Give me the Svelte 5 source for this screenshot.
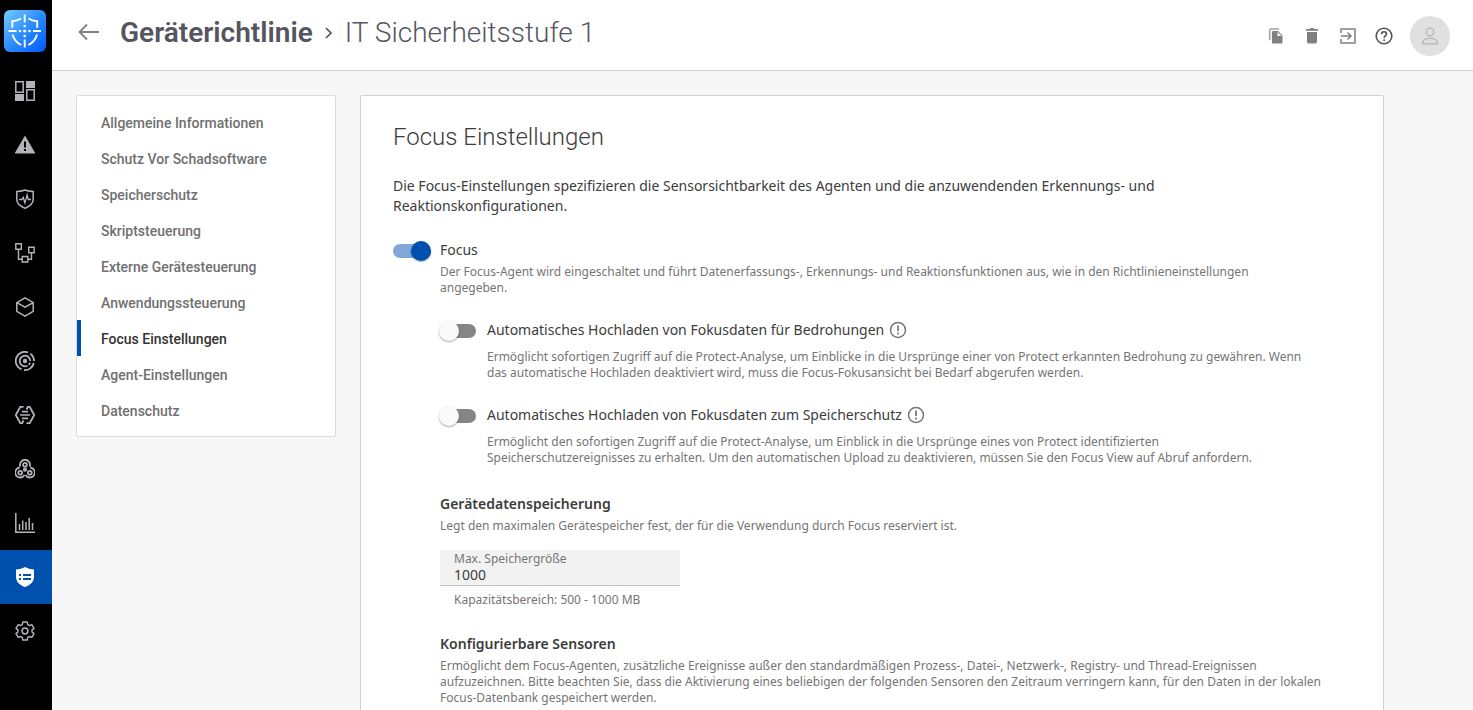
<script lang="ts">
    // Sections of the policy, in menu order
    const sections = [
        'Allgemeine Informationen',
        'Schutz Vor Schadsoftware',
        'Speicherschutz',
        'Skriptsteuerung',
        'Externe Gerätesteuerung',
        'Anwendungssteuerung',
        'Focus Einstellungen',
        'Agent-Einstellungen',
        'Datenschutz',
    ];

    const railItems = [
        { id: 'dashboard', label: 'Dashboard' },
        { id: 'alerts', label: 'Warnungen' },
        { id: 'protect', label: 'Protect' },
        { id: 'focus', label: 'Focus' },
        { id: 'assets', label: 'Assets' },
        { id: 'zones', label: 'Zonen' },
        { id: 'lists', label: 'Listen' },
        { id: 'users', label: 'Benutzer' },
        { id: 'reports', label: 'Berichte' },
        { id: 'policies', label: 'Richtlinien' },
        { id: 'settings', label: 'Einstellungen' },
    ];

    let activeSection = $state('Focus Einstellungen');
    let activeRail = $state('policies');
    let focusOn = $state(true);
    let storage = $state('1000');

    let uploads = $state([
        {
            id: 'upload-threats',
            on: false,
            label: 'Automatisches Hochladen von Fokusdaten für Bedrohungen',
            text: 'Ermöglicht sofortigen Zugriff auf die Protect-Analyse, um Einblicke in die Ursprünge einer von Protect erkannten Bedrohung zu gewähren. Wenn das automatische Hochladen deaktiviert wird, muss die Focus-Fokusansicht bei Bedarf abgerufen werden.',
        },
        {
            id: 'upload-memory',
            on: false,
            label: 'Automatisches Hochladen von Fokusdaten zum Speicherschutz',
            text: 'Ermöglicht den sofortigen Zugriff auf die Protect-Analyse, um Einblick in die Ursprünge eines von Protect identifizierten Speicherschutzereignisses zu erhalten. Um den automatischen Upload zu deaktivieren, müssen Sie den Focus View auf Abruf anfordern.',
        },
    ]);
</script>

<div class="shell">
    <nav class="rail" aria-label="Hauptnavigation">
        <a class="logo" href="#home" aria-label="Startseite">
            <svg width="42" height="42" viewBox="0 0 42 42" fill="none">
                <defs>
                    <linearGradient id="logo-fill" x1="0" y1="0" x2="1" y2="1">
                        <stop offset="0" stop-color="#79ccff" />
                        <stop offset="0.5" stop-color="#2b8dff" />
                        <stop offset="1" stop-color="#0059ff" />
                    </linearGradient>
                </defs>
                <rect width="42" height="42" rx="6" fill="url(#logo-fill)" />
                <g stroke="#fff" stroke-width="1.9">
                    <path d="M20.700 4.500v8M20.700 29.500v8M4.500 21h8M29 21h8" />
                    <path d="M17 8.500c-2.500 1.700-5.500 2.500-8.700 2.700v6.500M24.500 8.500c2.500 1.700 5.500 2.500 8.700 2.700v6.500M8.500 24.500c1.200 4.800 4.200 8.300 8.700 10.500M33 24.500c-1.200 4.800-4.200 8.300-8.700 10.500" />
                </g>
                <g fill="#fff">
                    <circle cx="20.700" cy="21" r="1.600" />
                    <circle cx="20.700" cy="16" r="1.300" />
                    <circle cx="20.700" cy="26" r="1.300" />
                    <circle cx="16" cy="21" r="1.300" />
                    <circle cx="25.500" cy="21" r="1.300" />
                </g>
            </svg>
        </a>
        {#each railItems as item}
            <a
                href={'#' + item.id}
                class="rail-item"
                class:active={activeRail === item.id}
                aria-label={item.label}
                onclick={() => (activeRail = item.id)}
            >
                <svg width="20" height="20" viewBox="0 0 20 20" fill="none" stroke="currentColor" stroke-width="1.500">
                    {#if item.id === 'dashboard'}
                        <path d="M.8.800h7.400v10.400H.8zM11.800 8.800h7.400v10.400h-7.400z" />
                        <path d="M11 0h9v7h-9zM0 13h9v7H0z" fill="currentColor" stroke="none" />
                    {:else if item.id === 'alerts'}
                        <path d="M10 .5 20.500 18.500H-.5zM9 6.500v6h2v-6zM9 14v2h2v-2z" fill="currentColor" fill-rule="evenodd" stroke="none" />
                    {:else if item.id === 'protect'}
                        <path d="M10 1c2.600 1 5.300 1.500 8.200 1.600v7.900c0 4-3.500 6.800-8.200 8.700-4.700-1.900-8.200-4.700-8.200-8.700V2.600C4.700 2.500 7.400 2 10 1z" />
                        <path d="M4 10.500h2.800l1.400-2.200 1.700 5.700 2.200-8 1.200 4.500H16" stroke-width="1.300" />
                    {:else if item.id === 'focus'}
                        <path d="M.8.800h5.500v5.500H.8zM13.700 4.200h5.500v5.500h-5.500zM7.200 13.500h5.600V19H7.200zM3.500 6.500v9.700h3.700M16.500 10v6.200h-3.700" stroke-width="1.400" />
                    {:else if item.id === 'assets'}
                        <path d="m10 .9 8.200 4.700v8.800L10 19.100l-8.200-4.700V5.600zM1.800 5.600 10 10.200l8.200-4.600" />
                    {:else if item.id === 'zones'}
                        <g stroke-width="1.800">
                            <path d="M13 1.500A9 9 0 1 0 6.500 18.300M9 19a9 9 0 0 0 9.800-7M19 10A9 9 0 0 0 15.300 2.700" />
                            <path d="M12.500 14.700A5.300 5.300 0 1 1 15.300 10M15 11.800a5.300 5.300 0 0 1-1.300 2" />
                        </g>
                        <circle cx="10" cy="10" r="2.200" fill="currentColor" stroke="none" />
                    {:else if item.id === 'lists'}
                        <path d="M8.500 1.800H5.300L.8 10l4.500 8.200H7.200l1.300-2.700M11.500 18.200h3.200l4.500-8.200-4.500-8.200h-1.900l-1.300 2.700" stroke-width="1.800" />
                        <path d="M7 6.700h6M5 10h10M7 13.300h6" stroke-width="1.700" />
                    {:else if item.id === 'users'}
                        <g stroke-width="1.800">
                            <path d="M5.300 7.500a5 5 0 1 1 9.400 0M4.800 8.500a5 5 0 1 0 4.800 7.300M15.200 8.500a5 5 0 1 1-4.800 7.300" />
                            <circle cx="10" cy="5.800" r="1.900" />
                            <circle cx="5.200" cy="13.700" r="1.900" />
                            <circle cx="14.800" cy="13.700" r="1.900" />
                            <circle cx="10" cy="10.700" r="1.200" />
                        </g>
                    {:else if item.id === 'reports'}
                        <path d="M.8 0v19.200H20M4.500 17v-6M7.700 17V7.500M11 17V9M14.200 17V5M17.500 17V10" />
                    {:else if item.id === 'policies'}
                        <path d="M10 0c2.700 1.600 5.700 2.400 9 2.500v7c0 5-3.300 8.500-9 10.500-5.700-2-9-5.500-9-10.500v-7C4.300 2.400 7.300 1.600 10 0z" fill="currentColor" stroke="none" />
                        <path d="M4 8h2M8 8h8M4 12h2M8 12h8" stroke="#0050ad" stroke-width="1.800" />
                    {:else}
                        <path d="m7.800 1-.5 2.600-1.600.9-2.500-.9L1 7.400l2 1.700v1.800l-2 1.700 2.200 3.800 2.500-.9 1.600.9.500 2.600h4.400l.5-2.600 1.600-.9 2.500.9 2.200-3.800-2-1.700V9.100l2-1.700-2.200-3.800-2.500.9-1.600-.9-.5-2.600z" stroke-linejoin="round" stroke-width="1.400" />
                        <circle cx="10" cy="10" r="2.900" />
                    {/if}
                </svg>
            </a>
        {/each}
    </nav>

    <div class="page">
        <header class="topbar">
            <button class="icon-btn back" aria-label="Zurück">
                <svg width="22" height="18" viewBox="0 0 22 18" fill="none" stroke="#808080" stroke-width="1.800">
                    <path d="M21 9H2M9 1.500 1.500 9 9 16.500" />
                </svg>
            </button>
            <h1 class="crumbs">
                <a href="#policies">Geräterichtlinie</a>
                <svg width="8" height="12" viewBox="0 0 8 12" fill="none" stroke="#55555f" stroke-width="1.700" aria-hidden="true">
                    <path d="m1 1 5 5-5 5" />
                </svg>
                <span>IT Sicherheitsstufe 1</span>
            </h1>
            <div class="actions">
                <button class="icon-btn" aria-label="Kopieren">
                    <svg width="16" height="16" viewBox="0 0 16 16">
                        <path d="M1.700 12V2.200C1.700 1.500 2.200 1 2.900 1H11" fill="none" stroke="#a3a3a3" stroke-width="1.500" />
                        <path d="M5.200 3H10l4.500 4.500v6.700c0 .7-.6 1.300-1.300 1.300h-8c-.7 0-1.300-.6-1.300-1.300V4.300C3.900 3.600 4.500 3 5.200 3zM9.500 4v4h4z" fill="#808080" fill-rule="evenodd" />
                    </svg>
                </button>
                <button class="icon-btn" aria-label="Löschen">
                    <svg width="16" height="16" viewBox="0 0 16 16" fill="#808080">
                        <path d="M2 1h3.500l1-1h3l1 1H14v1.700H2zM3 4h10v9.800c0 1-.7 1.700-1.700 1.700H4.700c-1 0-1.700-.7-1.700-1.700z" />
                    </svg>
                </button>
                <button class="icon-btn" aria-label="Exportieren">
                    <svg width="16" height="16" viewBox="0 0 16 16" fill="none" stroke="#808080" stroke-width="1.500">
                        <path d="M1 5V1h14v14H1v-4M1 8h10M7.500 4.500 11 8l-3.500 3.500" />
                    </svg>
                </button>
                <button class="icon-btn" aria-label="Hilfe">
                    <svg width="18" height="18" viewBox="0 0 18 18" fill="none" stroke="#555" stroke-width="1.600">
                        <circle cx="9" cy="9" r="7.800" />
                        <path d="M6.500 7.200c0-1.600 1-2.500 2.500-2.500s2.500.9 2.500 2.300c0 1.800-2.400 2-2.400 4M9.100 12.200v1.700" />
                    </svg>
                </button>
                <button class="avatar" aria-label="Benutzerkonto">
                    <svg width="18" height="18" viewBox="0 0 18 18" fill="none" stroke="#b4b4b8" stroke-width="1.300">
                        <circle cx="9" cy="5" r="3.800" />
                        <path d="M1.500 16.800c.4-3.700 3.300-5.600 7.500-5.600s7.100 1.900 7.500 5.600z" />
                    </svg>
                </button>
            </div>
        </header>

        <main class="content">
            <nav class="sections" aria-label="Abschnitte">
                {#each sections as section}
                    <a
                        href="#section"
                        class="section-link"
                        class:active={activeSection === section}
                        onclick={() => (activeSection = section)}>{section}</a
                    >
                {/each}
            </nav>

            <section class="card">
                <h2 class="card-title">Focus Einstellungen</h2>
                <p class="intro">
                    Die Focus-Einstellungen spezifizieren die Sensorsichtbarkeit des Agenten und die anzuwendenden Erkennungs- und
                    Reaktionskonfigurationen.
                </p>

                <div class="option">
                    <input type="checkbox" role="switch" class="switch" id="focus-on" bind:checked={focusOn} />
                    <div class="option-body">
                        <label class="label" for="focus-on">Focus</label>
                        <p class="hint focus-hint">
                            Der Focus-Agent wird eingeschaltet und führt Datenerfassungs-, Erkennungs- und Reaktionsfunktionen aus, wie in den
                            Richtlinieneinstellungen angegeben.
                        </p>

                        {#each uploads as upload}
                            <div class="option nested">
                                <input type="checkbox" role="switch" class="switch" id={upload.id} bind:checked={upload.on} />
                                <div class="option-body">
                                    <div class="label-row">
                                        <label class="label" for={upload.id}>{upload.label}</label>
                                        <svg width="18" height="18" viewBox="0 0 18 18" fill="none" stroke="#757575" stroke-width="1.500" aria-hidden="true">
                                            <circle cx="9" cy="9" r="7.500" />
                                            <path d="M9 4.500V10M9 11.500v2" stroke-width="1.700" />
                                        </svg>
                                    </div>
                                    <p class="hint">{upload.text}</p>
                                </div>
                            </div>
                        {/each}

                        <h3 class="subtitle">Gerätedatenspeicherung</h3>
                        <p class="hint">Legt den maximalen Gerätespeicher fest, der für die Verwendung durch Focus reserviert ist.</p>
                        <div class="field">
                            <label for="storage">Max. Speichergröße</label>
                            <input id="storage" type="text" inputmode="numeric" bind:value={storage} aria-describedby="storage-range" />
                        </div>
                        <p class="hint range" id="storage-range">Kapazitätsbereich: 500 - 1000 MB</p>

                        <h3 class="subtitle">Konfigurierbare Sensoren</h3>
                        <p class="hint sensors-hint">
                            Ermöglicht dem Focus-Agenten, zusätzliche Ereignisse außer den standardmäßigen Prozess-, Datei-, Netzwerk-, Registry- und
                            Thread-Ereignissen aufzuzeichnen. Bitte beachten Sie, dass die Aktivierung eines beliebigen der folgenden Sensoren den
                            Zeitraum verringern kann, für den Daten in der lokalen Focus-Datenbank gespeichert werden.
                        </p>
                    </div>
                </div>
            </section>
        </main>
    </div>
</div>

<style>
    :global(body) {
        margin: 0;
        background: #f7f7f7;
    }

    .shell {
        --blue: #0050ad;
        --text: #3c3c3c;
        --muted: #757575;
        --line: #d2d2d2;
        --font-title: Roboto, sans-serif;
        display: flex;
        height: 100vh;
        overflow: hidden;
        font-family: "Noto Sans", "Open Sans", sans-serif;
        font-size: 14px;
        line-height: 20px;
        color: var(--text);
    }

    h1, h2, h3, p {
        margin: 0;
    }

    a {
        color: inherit;
        text-decoration: none;
    }

    svg {
        display: block;
        flex: none;
    }

    button {
        padding: 0;
        border: none;
        background: none;
        cursor: pointer;
    }

    /* Left icon rail */
    .rail {
        flex: none;
        width: 52px;
        background: #000;
    }

    .logo {
        display: block;
        padding: 10px 4px 12px;
    }

    .rail-item {
        display: flex;
        align-items: center;
        height: 54px;
        padding-left: 15px;
        color: #b4b4b8;
    }

    .rail-item.active {
        background: var(--blue);
        color: #fff;
    }

    .page {
        display: flex;
        flex-direction: column;
        flex: 1;
        min-width: 0;
    }

    /* Top bar */
    .topbar {
        display: flex;
        align-items: center;
        flex: none;
        height: 68px;
        padding: 2px 23px 0 26px;
        background: #fff;
        border-bottom: 1px solid #ccc;
    }

    .icon-btn {
        display: flex;
        align-items: center;
        justify-content: center;
        width: 36px;
        height: 36px;
    }

    .back {
        width: 22px;
        padding-bottom: 8px;
    }

    .crumbs {
        display: flex;
        align-items: center;
        gap: 12px;
        margin-left: 20px;
        padding-bottom: 6px;
        font: 300 28px/36px var(--font-title);
        color: #55555f;
    }

    .crumbs a {
        font-weight: 600;
    }

    .actions {
        display: flex;
        align-items: center;
        margin-left: auto;
    }

    .avatar {
        display: flex;
        align-items: center;
        justify-content: center;
        width: 40px;
        height: 40px;
        margin-left: 8px;
        border-radius: 50%;
        background: #e0e0e0;
    }

    /* Scrolling area */
    .content {
        display: flex;
        align-items: flex-start;
        gap: 24px;
        flex: 1;
        min-height: 0;
        padding: 24px;
        overflow-y: auto;
        scrollbar-width: none;
    }

    .sections {
        box-sizing: border-box;
        flex: none;
        width: 260px;
        padding: 8px 0;
        background: #fff;
        border: 1px solid #dcdcdc;
        border-radius: 2px;
    }

    .section-link {
        display: block;
        height: 36px;
        padding-left: 20px;
        border-left: 4px solid transparent;
        font: 500 14px/38px var(--font-title);
        color: #707070;
    }

    .section-link.active {
        border-left-color: var(--blue);
        color: #333;
    }

    .card {
        box-sizing: border-box;
        flex: 1;
        min-width: 0;
        max-width: 1024px;
        padding: 24px 32px;
        background: #fff;
        border: 1px solid var(--line);
        border-radius: 2px;
    }

    .card-title {
        font: 300 24px/34px var(--font-title);
    }

    .intro {
        max-width: 820px;
        margin: 22px 0 24px;
    }

    /* Switch with its label and help text */
    .option {
        display: flex;
    }

    .nested {
        margin-top: 24px;
    }

    .option-body {
        flex: 1;
        min-width: 0;
    }

    .nested .hint {
        max-width: 816px;
        margin-top: 9px;
    }

    .switch {
        position: relative;
        flex: none;
        appearance: none;
        width: 36px;
        height: 14px;
        margin: 4px 11px 0 0;
        border-radius: 7px;
        background: #858585;
        cursor: pointer;
    }

    .switch::before {
        content: "";
        position: absolute;
        top: -3px;
        left: -1px;
        width: 20px;
        height: 20px;
        border-radius: 50%;
        background: #fafafa;
        box-shadow: 0 1px 2px rgba(0, 0, 0, 0.35);
    }

    .switch:checked {
        background: #80a7d6;
    }

    .switch:checked::before {
        left: 18px;
        background: var(--blue);
    }

    .label-row {
        display: flex;
        align-items: center;
        gap: 5px;
    }

    .label {
        display: block;
    }

    .hint {
        margin-top: 4px;
        font-size: 12px;
        line-height: 16px;
        color: var(--muted);
    }

    .focus-hint {
        max-width: 850px;
    }

    .sensors-hint {
        max-width: 896px;
    }

    .subtitle {
        margin-top: 28px;
        font-size: 14px;
        font-weight: 600;
        line-height: 20px;
    }

    .range + .subtitle {
        margin-top: 26px;
    }

    .field {
        box-sizing: border-box;
        width: 240px;
        margin-top: 16px;
        padding: 1px 14px 4px;
        background: #f2f2f2;
        border-bottom: 1px solid #c4c4c4;
        border-radius: 2px 2px 0 0;
    }

    .field label {
        display: block;
        font-size: 12px;
        line-height: 16px;
        color: var(--muted);
    }

    .field input {
        display: block;
        width: 100%;
        height: 14px;
        padding: 0;
        border: none;
        outline: none;
        background: none;
        font: inherit;
        line-height: 14px;
        color: inherit;
    }

    .range {
        margin-top: 6px;
        padding-left: 14px;
    }
</style>
